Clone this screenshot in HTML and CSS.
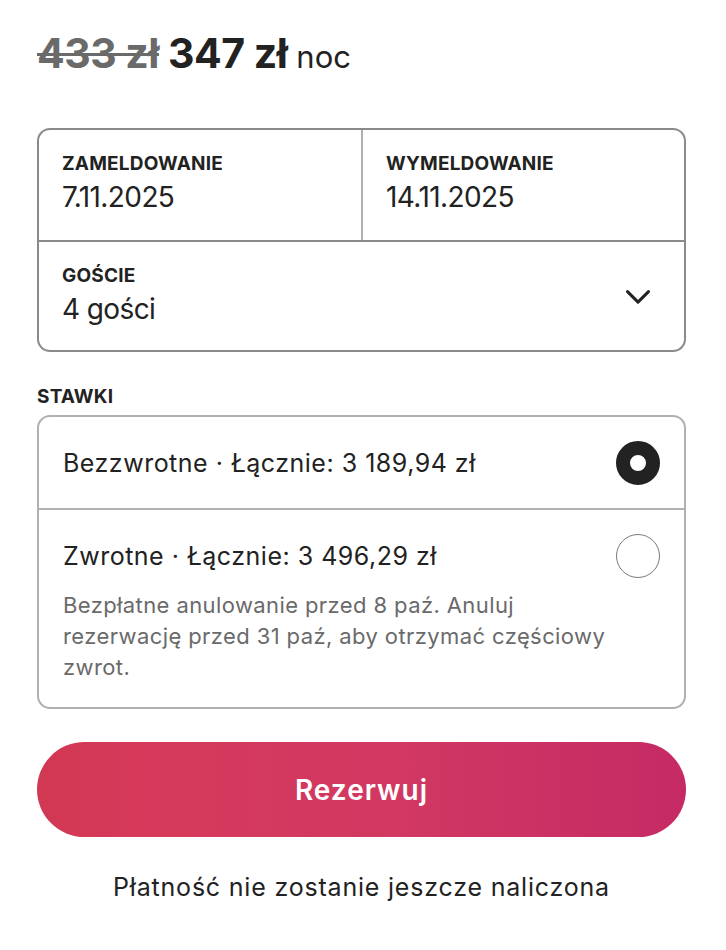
FILE: index.html
```html
<!DOCTYPE html>
<html lang="pl">
<head>
<meta charset="utf-8">
<link rel="stylesheet" href="styles.css">
</head>
<body>
<main class="card">
  <div class="price">
    <span class="old">433 zł</span>
    <span class="now">347 zł</span>
    <span class="unit">noc</span>
  </div>

  <section class="dates">
    <div class="row">
      <div class="cell">
        <div class="label">ZAMELDOWANIE</div>
        <div class="value">7.11.2025</div>
      </div>
      <div class="cell cell-right">
        <div class="label">WYMELDOWANIE</div>
        <div class="value">14.11.2025</div>
      </div>
    </div>
    <div class="guests">
      <div class="guests-text">
        <div class="label">GOŚCIE</div>
        <div class="value">4 gości</div>
      </div>
      <svg class="chev" width="28" height="28" viewBox="0 0 32 32" aria-hidden="true">
        <path d="M4 11 L16 23 L28 11" fill="none" stroke="#222" stroke-width="3.4" stroke-linecap="round" stroke-linejoin="round"/>
      </svg>
    </div>
  </section>

  <div class="section-title">STAWKI</div>
  <section class="rates">
    <div class="rate">
      <div class="rate-text">
        <div class="rate-title">Bezzwrotne · Łącznie: 3 189,94 zł</div>
      </div>
      <span class="radio radio-on"></span>
    </div>
    <div class="rate rate-last">
      <div class="rate-text">
        <div class="rate-title">Zwrotne · Łącznie: 3 496,29 zł</div>
        <div class="rate-desc">Bezpłatne anulowanie przed 8 paź. Anuluj rezerwację przed 31 paź, aby otrzymać częściowy zwrot.</div>
      </div>
      <span class="radio"></span>
    </div>
  </section>

  <button class="reserve">Rezerwuj</button>
  <p class="note">Płatność nie zostanie jeszcze naliczona</p>
</main>
</body>
</html>
```

FILE: styles.css
```css
html, body {
  margin: 0;
  padding: 0;
  background: #fff;
}
body {
  font-family: "Inter", "Noto Sans", sans-serif;
  color: #222;
}
.card {
  width: 649px;
  margin-left: 37px;
  padding-top: 27px;
}
.price {
  display: flex;
  align-items: baseline;
  line-height: 52px;
  height: 52px;
}
.old {
  font-size: 41px;
  font-weight: 700;
  color: #6a6a6a;
  text-decoration: line-through;
  text-decoration-thickness: 3px;
  letter-spacing: -0.5px;
}
.now {
  margin-left: 9px;
  font-size: 41px;
  font-weight: 700;
  color: #222;
  letter-spacing: -0.5px;
}
.unit {
  margin-left: 9px;
  font-size: 31px;
  color: #222;
}
.dates {
  margin-top: 49px;
  border: 2px solid #8a8a8a;
  border-radius: 13px;
  box-sizing: border-box;
  height: 224px;
  display: flex;
  flex-direction: column;
}
.row {
  display: flex;
  height: 110px;
  border-bottom: 2px solid #8a8a8a;
}
.cell {
  flex: 0 0 322px;
  padding: 23px 0 0 23px;
  box-sizing: border-box;
}
.cell-right {
  flex: 1;
  border-left: 2px solid #b0b0b0;
}
.label {
  font-size: 19px;
  font-weight: 700;
  color: #222;
  line-height: 22px;
  letter-spacing: 0.2px;
}
.value {
  font-size: 28px;
  line-height: 34px;
  margin-top: 5px;
  letter-spacing: -0.6px;
  color: #222;
}
.guests {
  flex: 1;
  display: flex;
  align-items: flex-start;
  justify-content: space-between;
  padding: 0 32px 0 23px;
}
.guests-text {
  padding-top: 23px;
}
.chev {
  margin-top: 40px;
}
.section-title {
  margin-top: 34px;
  font-size: 19px;
  font-weight: 700;
  line-height: 22px;
  letter-spacing: 0.2px;
}
.rates {
  margin-top: 7px;
  border: 2px solid #b0b0b0;
  border-radius: 13px;
}
.rate {
  display: flex;
  justify-content: space-between;
  align-items: flex-start;
  padding: 30px 24px 29px 24px;
  border-bottom: 2px solid #b0b0b0;
}
.rate-last {
  border-bottom: none;
  padding-bottom: 24px;
}
.rate-text {
  flex: 1;
  min-width: 0;
}
.rate-title {
  font-size: 25px;
  line-height: 32px;
  letter-spacing: 0.5px;
  color: #222;
}
.rate-desc {
  margin-top: 18px;
  margin-right: -8px;
  font-size: 22px;
  line-height: 31px;
  letter-spacing: 0.4px;
  color: #6a6a6a;
}
.radio {
  flex: 0 0 auto;
  width: 44px;
  height: 44px;
  box-sizing: border-box;
  border-radius: 50%;
  border: 1.5px solid #7a7a7a;
  margin: -6px 0 -6px 0;
}
.radio-on {
  border: 14px solid #222;
  background: #fff;
}
.reserve {
  display: block;
  width: 100%;
  height: 95px;
  margin-top: 33px;
  border: none;
  border-radius: 48px;
  background: linear-gradient(90deg, #d13852 0%, #d6395a 15%, #d13862 55%, #c52a64 100%);
  color: #fff;
  font-family: "Inter", "Noto Sans", sans-serif;
  font-size: 28px;
  font-weight: 600;
  letter-spacing: 1px;
}
.note {
  margin: 35px 0 0 0;
  text-align: center;
  font-size: 25px;
  line-height: 30px;
  letter-spacing: 0.8px;
  color: #222;
}
```
